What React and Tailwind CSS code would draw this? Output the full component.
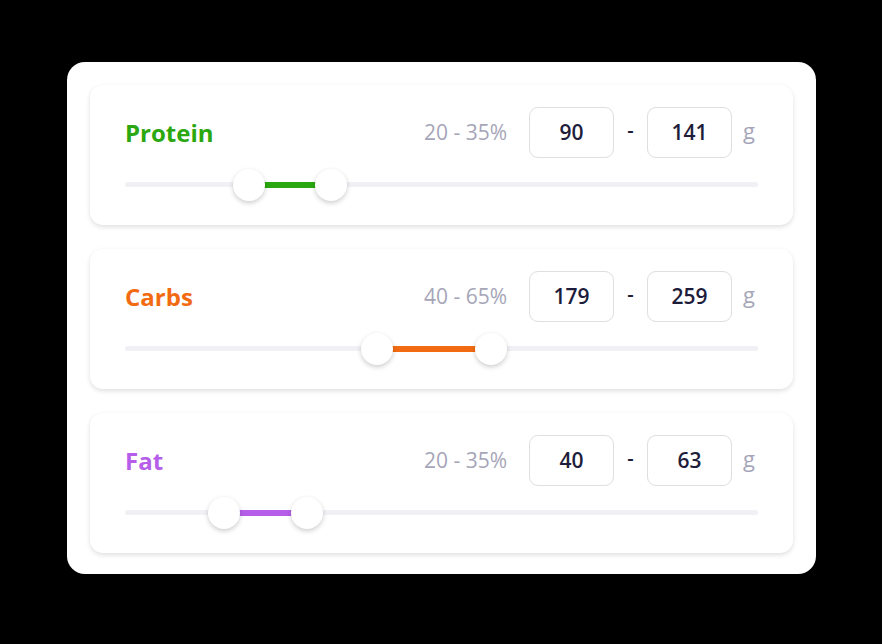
const macros = [
  { name: "Protein", color: "text-[#2ba70f]", fill: "bg-[#2ba70f]", range: "20 - 35%", min: "90", max: "141", lo: 124, hi: 206 },
  { name: "Carbs", color: "text-[#f26b12]", fill: "bg-[#f26b12]", range: "40 - 65%", min: "179", max: "259", lo: 252, hi: 366 },
  { name: "Fat", color: "text-[#b65ee9]", fill: "bg-[#b65ee9]", range: "20 - 35%", min: "40", max: "63", lo: 99, hi: 182 },
];

function ValueBox({ value }) {
  return (
    <div className="w-[85px] h-[51px] rounded-[9px] border border-[#dedee3] flex items-center justify-center text-[21px] font-semibold text-[#1d1d3b]">
      {value}
    </div>
  );
}

function MacroCard({ macro }) {
  return (
    <div className="bg-white rounded-[13px] shadow-[0_2px_5px_rgba(0,0,0,0.13)] px-[35px] pt-[22px] pb-[24px]">
      {/* Header */}
      <div className="flex items-center h-[51px] pr-[3px]">
        <h3 className={`flex-1 text-[24px] font-bold ${macro.color}`}>{macro.name}</h3>
        <span className="text-[21px] text-[#a6a6b8] mr-[22px]">{macro.range}</span>
        <ValueBox value={macro.min} />
        <span className="w-[33px] text-center text-[20px] font-semibold text-[#1d1d3b] -mt-[6px]">-</span>
        <ValueBox value={macro.max} />
        <span className="ml-[11px] text-[22px] text-[#a6a6b8] -mt-[4px]">g</span>
      </div>

      {/* Slider */}
      <div className="relative h-[32px] mt-[11px]">
        <div className="absolute left-0 right-0 top-[13px] h-[5px] rounded-full bg-[#f0f0f5]" />
        <div
          className={`absolute top-[13px] h-[6px] ${macro.fill}`}
          style={{ left: macro.lo, width: macro.hi - macro.lo }}
        />
        {[macro.lo, macro.hi].map((x, i) => (
          <div
            key={i}
            className="absolute top-0 w-[32px] h-[32px] -ml-[16px] rounded-full bg-white shadow-[0_2px_5px_rgba(0,0,0,0.2)]"
            style={{ left: x }}
          />
        ))}
      </div>
    </div>
  );
}

export default function App() {
  return (
    <div className="w-[882px] h-[644px] bg-black pt-[62px] pl-[67px] font-['Open_Sans',sans-serif]">
      <div className="w-[749px] bg-white rounded-[18px] pt-[23px] px-[23px] pb-[21px] flex flex-col gap-[24px]">
        {macros.map((m) => (
          <MacroCard key={m.name} macro={m} />
        ))}
      </div>
    </div>
  );
}
